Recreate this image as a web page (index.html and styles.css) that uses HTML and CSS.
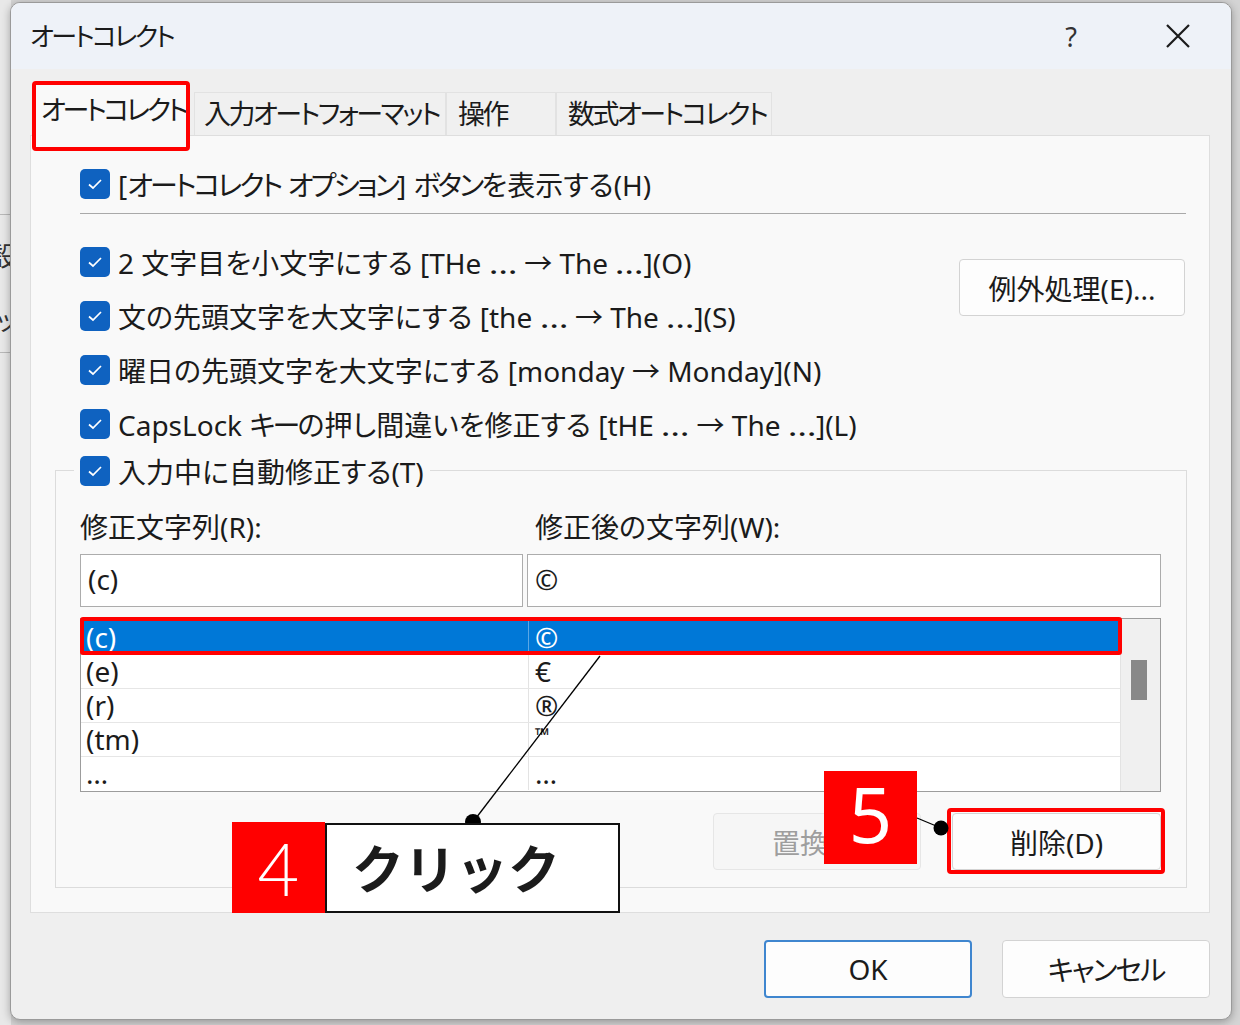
FILE: index.html
```html
<!DOCTYPE html>
<html lang="ja">
<head>
  <meta charset="UTF-8" />
  <title>オートコレクト</title>
  <link rel="stylesheet" href="styles.css">
</head>
<body>

  <div class="backwin">
    <div class="bw-line" style="top:214px"></div>
    <div class="bw-text" style="top:236px">設</div>
    <div class="bw-text" style="top:300px">ッ</div>
    <div class="bw-line" style="top:352px"></div>
  </div>

  <div class="dialog">
    <div class="titlebar">
      <span class="title">オートコレクト</span>
      <span class="help">?</span>
      <svg class="close" width="26" height="26" viewBox="0 0 26 26">
        <path d="M2 2 L24 24 M24 2 L2 24" stroke="#1b1b1b" stroke-width="2.2" fill="none"/>
      </svg>
    </div>

    <div class="body">
      <div class="tabs">
        <div class="tab active">オートコレクト</div>
        <div class="tab t-input">入力オートフォーマット</div>
        <div class="tab t-op">操作</div>
        <div class="tab t-math">数式オートコレクト</div>
      </div>

      <div class="panel">
        <div class="opt">
          <span class="cb"><svg width="18" height="14" viewBox="0 0 18 14"><path d="M3 7.5 L7 11 L15 3" stroke="#fff" stroke-width="1.7" fill="none"/></svg></span>
          <span>[<span class="k">オートコレクト</span> <span class="k">オプション</span>] <span class="k">ボタン</span>を表示する(H)</span>
        </div>
        <div class="sep"></div>

        <div class="mid">
          <div class="opts">
            <div class="opt">
              <span class="cb"><svg width="18" height="14" viewBox="0 0 18 14"><path d="M3 7.5 L7 11 L15 3" stroke="#fff" stroke-width="1.7" fill="none"/></svg></span>
              <span>2 文字目を小文字にする [THe <span class="ell">…</span> → The <span class="ell">…</span>](O)</span>
            </div>
            <div class="opt">
              <span class="cb"><svg width="18" height="14" viewBox="0 0 18 14"><path d="M3 7.5 L7 11 L15 3" stroke="#fff" stroke-width="1.7" fill="none"/></svg></span>
              <span>文の先頭文字を大文字にする [the <span class="ell">…</span> → The <span class="ell">…</span>](S)</span>
            </div>
            <div class="opt">
              <span class="cb"><svg width="18" height="14" viewBox="0 0 18 14"><path d="M3 7.5 L7 11 L15 3" stroke="#fff" stroke-width="1.7" fill="none"/></svg></span>
              <span>曜日の先頭文字を大文字にする [monday → Monday](N)</span>
            </div>
            <div class="opt">
              <span class="cb"><svg width="18" height="14" viewBox="0 0 18 14"><path d="M3 7.5 L7 11 L15 3" stroke="#fff" stroke-width="1.7" fill="none"/></svg></span>
              <span>CapsLock <span class="k">キー</span>の押し間違いを修正する [tHE <span class="ell">…</span> → The <span class="ell">…</span>](L)</span>
            </div>
          </div>
          <div class="btn btn-exc">例外処理(E)...</div>
        </div>

        <div class="group">
          <div class="opt legend">
            <span class="cb"><svg width="18" height="14" viewBox="0 0 18 14"><path d="M3 7.5 L7 11 L15 3" stroke="#fff" stroke-width="1.7" fill="none"/></svg></span>
            入力中に自動修正する(T)
          </div>

          <div class="pair labels">
            <div>修正文字列(R):</div>
            <div class="lbl2">修正後の文字列(W):</div>
          </div>
          <div class="pair fields">
            <div class="field">(c)</div>
            <div class="field f2">©</div>
          </div>

          <div class="list">
            <div class="rows">
              <div class="row sel"><span class="c1">(c)</span><span class="c2">©</span></div>
              <div class="row"><span class="c1">(e)</span><span class="c2">€</span></div>
              <div class="row"><span class="c1">(r)</span><span class="c2">®</span></div>
              <div class="row"><span class="c1">(tm)</span><span class="c2"><span class="tm">™</span></span></div>
              <div class="row last"><span class="c1">…</span><span class="c2">…</span></div>
            </div>
            <div class="sb"><div class="thumb"></div></div>
          </div>

          <div class="actions">
            <div class="btn disabled">置換(R)</div>
            <div class="btn del">削除(D)</div>
          </div>
        </div>
      </div>

      <div class="footer">
        <div class="btn ok">OK</div>
        <div class="btn cancel">キャンセル</div>
      </div>
    </div>
  </div>

  <!-- 注釈 -->
  <svg class="callout-lines" width="1240" height="1025" viewBox="0 0 1240 1025">
    <line x1="473" y1="822" x2="600" y2="656" stroke="#000" stroke-width="1.3"/>
    <circle cx="473" cy="822" r="8" fill="#000"/>
    <line x1="917" y1="818" x2="941" y2="828" stroke="#000" stroke-width="1.3"/>
    <circle cx="941" cy="828" r="7.5" fill="#000"/>
  </svg>

  <div class="step step4">
    <div class="num n4">4</div>
    <div class="step-label">クリック</div>
  </div>
  <div class="num n5">5</div>

</body>
</html>
```

FILE: styles.css
```css
* {
  box-sizing: border-box;
}
body {
  margin: 0;
  width: 1240px;
  height: 1025px;
  overflow: hidden;
  position: relative;
  background: #d4d4d4;
  font-family: "Noto Sans", "Noto Sans CJK JP", sans-serif;
  font-feature-settings: "palt";
  color: #1b1b1b;
}

.backwin {
  position: absolute;
  left: -30px;
  top: 0;
  width: 41px;
  height: 1025px;
  background: #e8e8e8;
}
.bw-line {
  position: absolute;
  left: 0;
  right: 0;
  height: 1px;
  background: #b8b8b8;
}
.bw-text {
  position: absolute;
  right: -6px;
  font-size: 26px;
  color: #333;
}

.dialog {
  position: absolute;
  left: 10px;
  top: 2px;
  width: 1222px;
  height: 1018px;
  border: 1px solid #9a9a9a;
  border-radius: 10px;
  background: #efefef;
  overflow: hidden;
  box-shadow: 0 2px 8px rgba(0, 0, 0, 0.3);
}

.titlebar {
  height: 66px;
  background: #eef2f8;
  display: flex;
  align-items: center;
  padding: 0 40px 0 19px;
}
.title {
  flex: 1;
  font-size: 26px;
  line-height: 1;
  letter-spacing: -2.5px;
}
.help {
  font-size: 27px;
  line-height: 1;
  margin-right: 88px;
  color: #333;
}

.body {
  padding: 15px 21px 21px 19px;
}

.tabs {
  display: flex;
  align-items: flex-end;
  height: 51px;
  padding-left: 5px;
}
.tab {
  height: 43px;
  border: 1px solid #e2e2e2;
  border-bottom: none;
  background: #f0f0f0;
  font-size: 27px;
  line-height: 41px;
  padding-left: 9px;
  white-space: nowrap;
  letter-spacing: -2.5px;
}
.tab.active {
  width: 154px;
  height: 52px;
  margin-bottom: -1px;
  padding-left: 5px;
  line-height: 50px;
  letter-spacing: -3.2px;
  background: #f9f9f9;
  border-color: #f9f9f9;
  position: relative;
  z-index: 1;
}
.tab.active::after {
  content: "";
  position: absolute;
  inset: -4px -2px -15px -4px;
  border: 4px solid #f00;
  border-radius: 4px;
}
.t-input {
  width: 252px;
  margin-left: 5px;
}
.t-op {
  width: 110px;
  padding-left: 11px;
}
.t-math {
  width: 216px;
  padding-left: 11px;
}

.panel {
  height: 778px;
  background: #f9f9f9;
  border: 1px solid #dedede;
  padding: 31px 22px 0 24px;
}

.opt {
  display: flex;
  align-items: center;
  gap: 8px;
  height: 34px;
  margin-left: 25px;
  font-size: 28px;
  white-space: nowrap;
}
.k {
  letter-spacing: -2.8px;
}
.ell {
  display: inline-block;
  transform: scaleX(1.3);
  margin: 0 3px;
}
.cb {
  flex: none;
  width: 30px;
  height: 30px;
  border-radius: 5px;
  background: #0f62c0;
  display: flex;
  align-items: center;
  justify-content: center;
}

.sep {
  height: 1px;
  background: #a9a9a9;
  margin: 12px 1px 0 25px;
}

.mid {
  display: flex;
  justify-content: space-between;
  margin-top: 31px;
}
.opts {
  display: flex;
  flex-direction: column;
  gap: 20px;
}

.btn {
  height: 57px;
  width: 208px;
  border: 1px solid #d3d3d3;
  border-radius: 4px;
  background: #fdfdfd;
  font-size: 28px;
  display: flex;
  align-items: center;
  justify-content: center;
  white-space: nowrap;
}
.btn-exc {
  width: 226px;
  margin: 14px 2px 0 0;
}

.group {
  margin-top: 29px;
  border: 1px solid #dcdcdc;
  padding: 0 25px 17px 24px;
}
.legend {
  width: max-content;
  margin: -17px 0 0 -6px;
  padding: 0 6px;
  background: #f9f9f9;
}

.pair {
  display: grid;
  grid-template-columns: 443px 634px;
  column-gap: 4px;
}
.labels {
  margin-top: 22px;
  font-size: 28px;
  line-height: 34px;
}
.lbl2 {
  padding-left: 8px;
}
.fields {
  margin-top: 10px;
}
.field {
  height: 53px;
  background: #fff;
  border: 1px solid #acacac;
  font-size: 28px;
  line-height: 49px;
  padding-left: 7px;
}

.list {
  margin-top: 11px;
  height: 174px;
  border: 1px solid #9c9c9c;
  background: #fff;
  display: flex;
  padding-top: 2px;
}
.rows {
  flex: 1;
}
.row {
  display: grid;
  grid-template-columns: 447px 1fr;
  height: 34px;
  border-bottom: 1px solid #e6e6e6;
  font-size: 28px;
  line-height: 32px;
}
.row.last {
  height: 33px;
  border-bottom: none;
}
.c1 {
  padding-left: 5px;
}
.c2 {
  padding-left: 6px;
  border-left: 1px solid #e3e3e3;
}
.tm {
  font-size: 19px;
  vertical-align: top;
  line-height: 24px;
}
.row.sel {
  background: #0078d7;
  color: #fff;
  position: relative;
}
.row.sel .c2 {
  border-left-color: #5aa7e6;
}
.row.sel::after {
  content: "";
  position: absolute;
  inset: -4px -2px -1px -1px;
  border: 4px solid #f00;
  border-radius: 3px;
}
.sb {
  width: 40px;
  background: #f0f0f0;
  border-left: 1px solid #e3e3e3;
  margin-top: -2px;
  padding: 41px 0 0 10px;
}
.thumb {
  width: 16px;
  height: 40px;
  background: #888;
}

.actions {
  display: flex;
  justify-content: flex-end;
  gap: 31px;
  margin-top: 21px;
}
.btn.disabled {
  color: #9e9e9e;
  background: #f6f6f6;
  border-color: #e6e6e6;
}
.btn.del {
  width: 209px;
  position: relative;
}
.btn.del::after {
  content: "";
  position: absolute;
  inset: -6px -5px -5px -6px;
  border: 4px solid #f00;
  border-radius: 4px;
}

.footer {
  display: flex;
  justify-content: flex-end;
  gap: 30px;
  margin-top: 27px;
}
.footer .btn {
  height: 58px;
}
.btn.ok {
  border: 2px solid #3f86cf;
}
.btn.cancel {
  letter-spacing: -2px;
}

/* 注釈 */
.callout-lines {
  position: absolute;
  left: 0;
  top: 0;
  pointer-events: none;
}
.step {
  position: absolute;
  display: flex;
}
.step4 {
  left: 232px;
  top: 822px;
}
.num {
  width: 93px;
  height: 91px;
  background: #f00;
  color: #fff;
  display: flex;
  align-items: center;
  justify-content: center;
}
.n4 {
  font-family: "Lato", sans-serif;
  font-weight: 300;
  font-size: 72px;
}
.n5 {
  position: absolute;
  left: 824px;
  top: 771px;
  height: 93px;
  padding-bottom: 8px;
  font-size: 76px;
}
.step-label {
  width: 295px;
  height: 90px;
  margin-top: 1px;
  background: #fff;
  border: 2px solid #111;
  font-family: "Noto Sans CJK JP", sans-serif;
  font-feature-settings: normal;
  font-weight: 700;
  font-size: 52px;
  line-height: 84px;
  padding-left: 25px;
}
```
